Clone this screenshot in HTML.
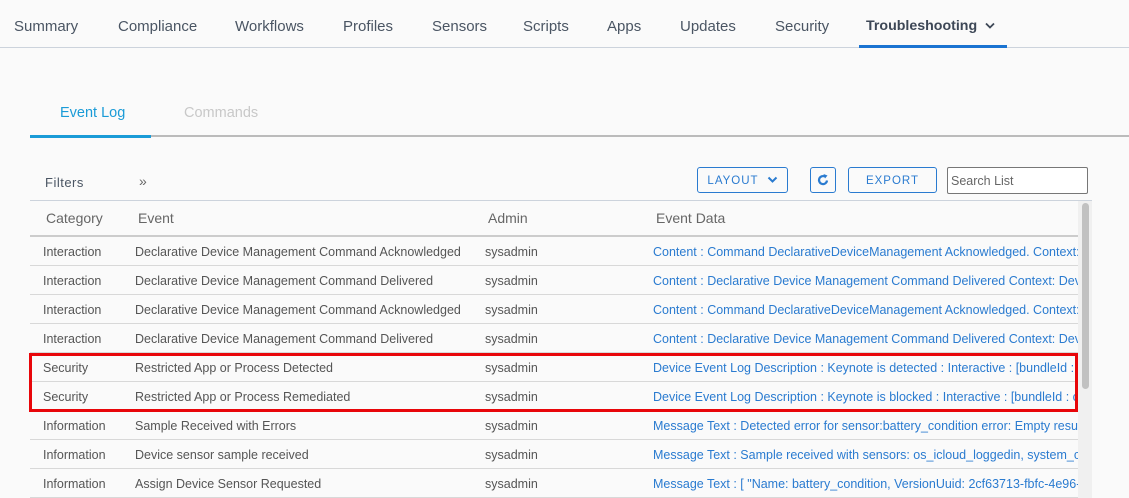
<!DOCTYPE html>
<html><head><style>
*{margin:0;padding:0;box-sizing:border-box}
body{width:1129px;height:498px;overflow:hidden;background:#fafafa;font-family:"Liberation Sans",sans-serif;position:relative;color:#555}
.a{position:absolute;white-space:nowrap}
.nav{top:18px;font-size:15px;color:#4a5563}
.row{position:absolute;left:30px;width:1048px;height:29px;border-bottom:1px solid #d8d8d8;font-size:12.5px;color:#555}
.row span{position:absolute;top:8px;white-space:nowrap}
.row .d{color:#2a7bd0;left:623px;width:425px;overflow:hidden}
.btn{position:absolute;border:1px solid #2a7bd0;border-radius:3px;color:#2a7bd0;font-size:11.5px;letter-spacing:1px;text-align:center;line-height:26px;height:26px}
</style></head><body>
<div class="a nav" style="left:14px">Summary</div>
<div class="a nav" style="left:118px">Compliance</div>
<div class="a nav" style="left:235px">Workflows</div>
<div class="a nav" style="left:343px">Profiles</div>
<div class="a nav" style="left:432px">Sensors</div>
<div class="a nav" style="left:523px">Scripts</div>
<div class="a nav" style="left:607px">Apps</div>
<div class="a nav" style="left:680px">Updates</div>
<div class="a nav" style="left:775px">Security</div>
<div class="a nav" style="left:866px;color:#3d4756;font-weight:bold;font-size:14.2px">Troubleshooting</div>
<svg class="a" style="left:984px;top:22px" width="12" height="8" viewBox="0 0 12 8"><path d="M2 1.5L6 5.5L10 1.5" stroke="#3d4756" stroke-width="1.8" fill="none"/></svg>
<div class="a" style="left:0;top:47px;width:1129px;height:1px;background:#ccd3dc"></div>
<div class="a" style="left:859px;top:45px;width:148px;height:3px;background:#1a73d1"></div>

<div class="a" style="left:60px;top:105px;font-size:14.5px;color:#1a9bd7">Event Log</div>
<div class="a" style="left:184px;top:105px;font-size:14.5px;color:#c8c8c8">Commands</div>
<div class="a" style="left:32px;top:135px;width:1097px;height:2px;background:#bbb"></div>
<div class="a" style="left:30px;top:135px;width:121px;height:3px;background:#1a9bd7"></div>

<div class="a" style="left:45px;top:175px;font-size:13px;color:#4a5563;letter-spacing:.5px">Filters</div>
<div class="a" style="left:139px;top:173px;font-size:14px;color:#666">»</div>
<div class="btn" style="left:697px;top:167px;width:91px">LAYOUT <svg width="11" height="8" viewBox="0 0 11 8" style="margin-left:4px"><path d="M1.5 1.5L5.5 5.5L9.5 1.5" stroke="#2a7bd0" stroke-width="2" fill="none"/></svg></div>
<div class="btn" style="left:810px;top:167px;width:26px;letter-spacing:0"><svg width="14" height="14" viewBox="0 0 14 14" style="margin-top:5px"><path d="M11 7.5A4 4 0 1 1 9 3.6" stroke="#2a7bd0" stroke-width="2.2" fill="none"/><path d="M7.5 1L11.5 2.5L9 5.5Z" fill="#2a7bd0"/></svg></div>
<div class="btn" style="left:848px;top:167px;width:89px">EXPORT</div>
<div class="a" style="left:947px;top:167px;width:141px;height:27px;border:1px solid #777;border-radius:2px;background:#fff;font-size:12.5px;color:#666;padding:6px 0 0 3px">Search List</div>

<div class="a" style="left:30px;top:200px;width:1062px;height:1px;background:#ccd3dc"></div>
<div class="a" style="left:46px;top:210px;font-size:14px;color:#666">Category</div>
<div class="a" style="left:138px;top:210px;font-size:14px;color:#666">Event</div>
<div class="a" style="left:488px;top:210px;font-size:14px;color:#666">Admin</div>
<div class="a" style="left:656px;top:210px;font-size:14px;color:#666">Event Data</div>
<div class="a" style="left:30px;top:235px;width:1048px;height:2px;background:#ccc"></div>
<div class="a" style="left:1078px;top:201px;width:14px;height:297px;background:#f0f0f0"></div>
<div class="a" style="left:1082px;top:203px;width:7px;height:186px;background:#c1c1c1;border-radius:4px"></div>

<div class="row" style="top:237px"><span style="left:13px">Interaction</span><span style="left:105px">Declarative Device Management Command Acknowledged</span><span style="left:455px">sysadmin</span><span class="d">Content : Command DeclarativeDeviceManagement Acknowledged. Context: Dev</span></div>
<div class="row" style="top:266px"><span style="left:13px">Interaction</span><span style="left:105px">Declarative Device Management Command Delivered</span><span style="left:455px">sysadmin</span><span class="d">Content : Declarative Device Management Command Delivered Context: Device</span></div>
<div class="row" style="top:295px"><span style="left:13px">Interaction</span><span style="left:105px">Declarative Device Management Command Acknowledged</span><span style="left:455px">sysadmin</span><span class="d">Content : Command DeclarativeDeviceManagement Acknowledged. Context: Dev</span></div>
<div class="row" style="top:324px"><span style="left:13px">Interaction</span><span style="left:105px">Declarative Device Management Command Delivered</span><span style="left:455px">sysadmin</span><span class="d">Content : Declarative Device Management Command Delivered Context: Device</span></div>
<div class="row" style="top:353px"><span style="left:13px">Security</span><span style="left:105px">Restricted App or Process Detected</span><span style="left:455px">sysadmin</span><span class="d">Device Event Log Description : Keynote is detected : Interactive : [bundleId : com</span></div>
<div class="row" style="top:382px"><span style="left:13px">Security</span><span style="left:105px">Restricted App or Process Remediated</span><span style="left:455px">sysadmin</span><span class="d">Device Event Log Description : Keynote is blocked : Interactive : [bundleId : com</span></div>
<div class="row" style="top:411px"><span style="left:13px">Information</span><span style="left:105px">Sample Received with Errors</span><span style="left:455px">sysadmin</span><span class="d">Message Text : Detected error for sensor:battery_condition error: Empty result</span></div>
<div class="row" style="top:440px"><span style="left:13px">Information</span><span style="left:105px">Device sensor sample received</span><span style="left:455px">sysadmin</span><span class="d">Message Text : Sample received with sensors: os_icloud_loggedin, system_cpu</span></div>
<div class="row" style="top:469px"><span style="left:13px">Information</span><span style="left:105px">Assign Device Sensor Requested</span><span style="left:455px">sysadmin</span><span class="d">Message Text : [ "Name: battery_condition, VersionUuid: 2cf63713-fbfc-4e96-a</span></div>

<div class="a" style="left:29px;top:353px;width:1049px;height:59px;border:3.5px solid #e8060a"></div>
</body></html>
